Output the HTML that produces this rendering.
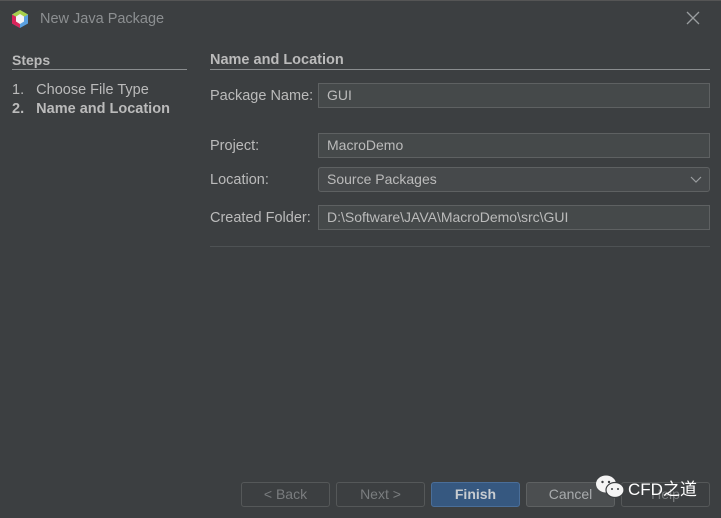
<!DOCTYPE html>
<html><head><style>
body{margin:0;width:721px;height:518px;background:#3c3f41;font-family:"Liberation Sans","Noto Sans CJK SC",sans-serif;font-size:14px;color:#bbbbbb;position:relative;overflow:hidden}
.a{position:absolute;white-space:nowrap}
.f{position:absolute;left:318px;width:392px;height:25px;border:1px solid #5e6162;background:#45494a;box-sizing:border-box;padding-left:8px;line-height:23px;color:#bbbbbb}
.b{position:absolute;top:482px;width:89px;height:25px;box-sizing:border-box;border:1px solid #555859;border-radius:3px;text-align:center;line-height:23px;color:#7a7d7f}
</style></head><body>
<div class="a" style="left:0;top:0;width:721px;height:1px;background:#555"></div>
<svg class="a" style="left:10px;top:9px" width="20" height="20" viewBox="0 0 20 20">
<polygon points="10,1 18,5.5 18,14.5 10,19 2,14.5 2,5.5" fill="#5aa0e0"/>
<polygon points="10,1 18,5.5 10,10 2,5.5" fill="#a8d04a"/>
<polygon points="2,5.5 10,10 10,19 2,14.5" fill="#d8255a"/>
<polygon points="10,5 14,7.5 14,12.5 10,15 6,12.5 6,7.5" fill="#f4f4f4"/>
</svg>
<div class="a" style="left:40px;top:11px;color:#8c8f91;font-size:14.5px">New Java Package</div>
<svg class="a" style="left:686px;top:11px" width="14" height="14" viewBox="0 0 14 14"><path d="M1 1L13 13M13 1L1 13" stroke="#9a9d9f" stroke-width="1.3"/></svg>
<div class="a" style="left:12px;top:52px;font-weight:bold">Steps</div>
<div class="a" style="left:12px;top:69px;width:175px;height:1px;background:#8a8d8f"></div>
<div class="a" style="left:12px;top:82px;font-size:14.5px">1.&nbsp;&nbsp; Choose File Type</div>
<div class="a" style="left:12px;top:101px;font-weight:bold;font-size:14.5px">2.&nbsp;&nbsp; Name and Location</div>
<div class="a" style="left:210px;top:52px;font-weight:bold;font-size:14.5px">Name and Location</div>
<div class="a" style="left:210px;top:69px;width:500px;height:1px;background:#8a8d8f"></div>
<div class="a" style="left:210px;top:88px;font-size:14.5px">Package Name:</div>
<div class="f" style="top:83px">GUI</div>
<div class="a" style="left:210px;top:138px;font-size:14.5px">Project:</div>
<div class="f" style="top:133px">MacroDemo</div>
<div class="a" style="left:210px;top:172px;font-size:14.5px">Location:</div>
<div class="f" style="top:167px;background:#46494b;border-radius:3px">Source Packages<svg style="position:absolute;right:7px;top:8px" width="12" height="7" viewBox="0 0 12 7"><path d="M1 1L6 6L11 1" stroke="#9a9d9f" fill="none" stroke-width="1.2"/></svg></div>
<div class="a" style="left:210px;top:210px;font-size:14.5px">Created Folder:</div>
<div class="f" style="top:205px">D:\Software\JAVA\MacroDemo\src\GUI</div>
<div class="a" style="left:210px;top:246px;width:500px;height:1px;background:#4e5254"></div>
<div class="b" style="left:241px">&lt; Back</div>
<div class="b" style="left:336px">Next &gt;</div>
<div class="b" style="left:431px;background:#365880;border-color:#4a6e99;color:#c8ccd0;font-weight:bold">Finish</div>
<div class="b" style="left:526px;background:#4b4e50;border-color:#5e6162;color:#a8abad">Cancel</div>
<div class="b" style="left:621px">Help</div>
<svg class="a" style="left:595px;top:474px" width="30" height="26" viewBox="0 0 30 26">
<ellipse cx="11" cy="10" rx="10" ry="8.5" fill="#f4f4f4"/>
<ellipse cx="20" cy="16" rx="9" ry="7.5" fill="#f4f4f4" stroke="#3c3f41" stroke-width="1.2"/>
<circle cx="7.5" cy="8" r="1.2" fill="#3c3f41"/><circle cx="14" cy="8" r="1.2" fill="#3c3f41"/>
<circle cx="17" cy="15" r="1" fill="#3c3f41"/><circle cx="23" cy="15" r="1" fill="#3c3f41"/>
</svg>
<div class="a" style="left:628px;top:475px;color:#fff;font-size:17px">CFD之道</div>
</body></html>
